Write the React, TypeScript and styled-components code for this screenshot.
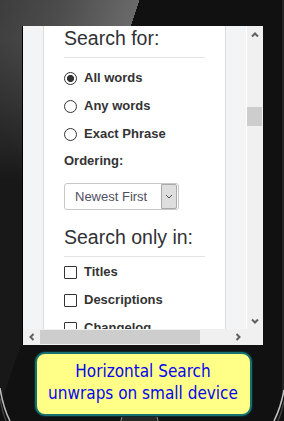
import React from "react";
import styled, { createGlobalStyle } from "styled-components";

const Global = createGlobalStyle`
  html, body { margin: 0; padding: 0; background: #111; }
  body { font-family: "Liberation Sans", Arial, sans-serif; }
`;

const Phone = styled.div`
  position: relative;
  width: 284px;
  height: 421px;
  overflow: hidden;
  box-sizing: border-box;
  padding: 26px 0 0 23px;
  background:
    linear-gradient(109deg, transparent 0 132px, #111 132px),
    linear-gradient(to bottom, rgba(24, 24, 24, 0) 0, rgba(24, 24, 24, 0) 40px, rgba(24, 24, 24, 1) 180px),
    linear-gradient(109deg, #3d3d3d 0, #4c4c4c 60px, #6a6a6a 132px);
`;

const Decor = styled.svg`
  position: absolute;
  left: 0;
  top: 0;
  pointer-events: none;
`;

const Column = styled.div`
  position: relative;
  width: 240px;
  display: flex;
  flex-direction: column;
  align-items: center;
`;

const Screen = styled.div`
  width: 240px;
  height: 319px;
  display: grid;
  grid-template-columns: 223px 17px;
  grid-template-rows: 303px 16px;
  background: #f0f0f0;
  box-shadow: -1px 0 0 #000;
`;

const Viewport = styled.div`
  background: #f3f4f6;
  padding: 0 20px;
  overflow: hidden;
`;

const Panel = styled.div`
  background: #fff;
  border-left: 1px solid #dcdcdc;
  border-right: 1px solid #dcdcdc;
  padding: 0 20px;
  height: 360px;
  color: #333;
`;

const Heading = styled.h2<{ $spaced?: boolean }>`
  margin: ${(p) => (p.$spaced ? "15px" : "0")} 0 0;
  font-size: 19.5px;
  line-height: 24px;
  font-weight: normal;
  color: #2f3136;
  white-space: nowrap;
`;

const Rule = styled.div<{ $gap?: number }>`
  height: 1px;
  background: #e4e4e4;
  margin: 7px 0 ${(p) => p.$gap ?? 0}px;
`;

const OptionRow = styled.div`
  display: flex;
  align-items: center;
  gap: 7px;
  height: 28px;
  font-size: 13px;
  font-weight: bold;
  white-space: nowrap;
`;

const Radio = styled.span<{ $checked?: boolean }>`
  width: 13px;
  height: 13px;
  box-sizing: border-box;
  border: 1px solid #333;
  border-radius: 50%;
  margin-top: 3px;
  flex: none;
  background: ${(p) =>
    p.$checked ? "radial-gradient(circle, #333 0 3.2px, #fff 3.9px)" : "#fff"};
`;

const Checkbox = styled.span`
  width: 13px;
  height: 13px;
  box-sizing: border-box;
  border: 1px solid #333;
  border-radius: 1px;
  margin-top: 3px;
  flex: none;
  background: #fff;
`;

const FieldLabel = styled.div`
  height: 28px;
  line-height: 28px;
  font-size: 13px;
  font-weight: bold;
`;

const Select = styled.div`
  margin-top: 8px;
  width: 115px;
  height: 27px;
  box-sizing: border-box;
  border: 1px solid #c8c8c8;
  border-radius: 3px;
  display: flex;
  background: #fff;
`;

const SelectValue = styled.span`
  flex: 1;
  padding-left: 10px;
  font-size: 13px;
  line-height: 25px;
  color: #4f4f5f;
  white-space: nowrap;
`;

const SelectButton = styled.span`
  width: 16px;
  box-sizing: border-box;
  margin: 0 1px 0 0;
  border: 1px solid #a9a9a9;
  border-radius: 0 2px 2px 0;
  background: #dedede;
  display: flex;
  align-items: center;
  justify-content: center;
`;

const VScroll = styled.div`
  background: #f0f0f0;
  border-left: 1px solid #fff;
  display: flex;
  flex-direction: column;
`;

const HScroll = styled.div`
  background: #f0f0f0;
  display: flex;
  align-items: stretch;
`;

const Corner = styled.div`
  background: #f0f0f0;
`;

const ArrowButton = styled.div<{ $horizontal?: boolean }>`
  flex: none;
  width: ${(p) => (p.$horizontal ? "17px" : "100%")};
  height: ${(p) => (p.$horizontal ? "100%" : "17px")};
  display: flex;
  align-items: center;
  justify-content: center;
`;

const Track = styled.div<{ $horizontal?: boolean }>`
  flex: 1;
  display: flex;
  flex-direction: ${(p) => (p.$horizontal ? "row" : "column")};
`;

const Thumb = styled.div<{ $horizontal?: boolean }>`
  background: #cdcdcd;
  ${(p) =>
    p.$horizontal
      ? "width: 160px; height: 14px; margin-top: 1px;"
      : "height: 19px; width: 15px; margin-top: 64px;"}
`;

const Callout = styled.div`
  margin-top: 7px;
  width: 217px;
  height: 64px;
  box-sizing: border-box;
  border: 2px solid #167070;
  border-radius: 10px;
  background: #ffff88;
  box-shadow: 0 0 0 1px #0c2a2a;
  padding-bottom: 4px;
  display: flex;
  flex-direction: column;
  align-items: center;
  justify-content: center;
  font-family: "DejaVu Sans Condensed", "Open Sans", sans-serif;
  font-size: 17px;
  line-height: 22px;
  color: #0505f0;
  white-space: nowrap;
`;

const Chevron = ({ dir }: { dir: "up" | "down" | "left" | "right" }) => {
  const pts = {
    up: "1,5.5 4,2.5 7,5.5",
    down: "1,2.5 4,5.5 7,2.5",
    left: "5.5,1 2.5,4 5.5,7",
    right: "2.5,1 5.5,4 2.5,7",
  }[dir];
  return (
    <svg width="8" height="8" viewBox="0 0 8 8">
      <polyline points={pts} fill="none" stroke="#606060" strokeWidth="2" />
    </svg>
  );
};

const SmallChevron = () => (
  <svg width="8" height="5" viewBox="0 0 8 5">
    <polyline points="1,1 4,4 7,1" fill="none" stroke="#555" strokeWidth="1" />
  </svg>
);

export default function App() {
  return (
    <>
      <Global />
      <Phone>
        <Decor width="284" height="421" viewBox="0 0 284 421">
          <path d="M283 0 V392" stroke="#2e2e2e" strokeWidth="1.5" fill="none" />
          <path d="M0 388 Q3 407 10 421" stroke="#bdbdbd" strokeWidth="1.5" fill="none" />
          <path d="M0 398 Q2 411 6 421" stroke="#4a4a4a" strokeWidth="1.2" fill="none" />
          <path d="M284 390 Q281 407 274 421" stroke="#c4c4c4" strokeWidth="1.5" fill="none" />
          <path d="M284 401 Q282 412 278 421" stroke="#4a4a4a" strokeWidth="1.2" fill="none" />
          <rect x="121" y="413" width="37" height="20" rx="8" fill="#262626" stroke="#8a8a8a" strokeWidth="1" />
        </Decor>
        <Column>
          <Screen>
            <Viewport>
              <Panel>
                <Heading>Search for:</Heading>
                <Rule $gap={5} />
                <OptionRow>
                  <Radio $checked />
                  All words
                </OptionRow>
                <OptionRow>
                  <Radio />
                  Any words
                </OptionRow>
                <OptionRow>
                  <Radio />
                  Exact Phrase
                </OptionRow>
                <FieldLabel>Ordering:</FieldLabel>
                <Select>
                  <SelectValue>Newest First</SelectValue>
                  <SelectButton>
                    <SmallChevron />
                  </SelectButton>
                </Select>
                <Heading $spaced>Search only in:</Heading>
                <Rule />
                <OptionRow>
                  <Checkbox />
                  Titles
                </OptionRow>
                <OptionRow>
                  <Checkbox />
                  Descriptions
                </OptionRow>
                <OptionRow>
                  <Checkbox />
                  Changelog
                </OptionRow>
              </Panel>
            </Viewport>
            <VScroll>
              <ArrowButton>
                <Chevron dir="up" />
              </ArrowButton>
              <Track>
                <Thumb />
              </Track>
              <ArrowButton>
                <Chevron dir="down" />
              </ArrowButton>
            </VScroll>
            <HScroll>
              <ArrowButton $horizontal>
                <Chevron dir="left" />
              </ArrowButton>
              <Track $horizontal>
                <Thumb $horizontal />
              </Track>
              <ArrowButton $horizontal>
                <Chevron dir="right" />
              </ArrowButton>
            </HScroll>
            <Corner />
          </Screen>
          <Callout>
            <span>Horizontal Search</span>
            <span>unwraps on small device</span>
          </Callout>
        </Column>
      </Phone>
    </>
  );
}
